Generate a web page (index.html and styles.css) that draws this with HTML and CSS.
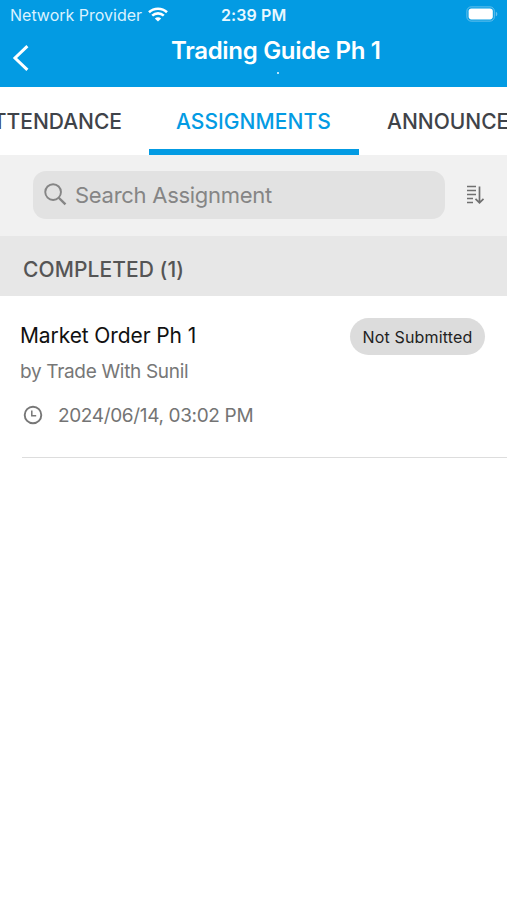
FILE: index.html
```html
<!DOCTYPE html>
<html lang="en">
<head>
<meta charset="utf-8">
<title>Trading Guide Ph 1</title>
<link rel="stylesheet" href="styles.css">
</head>
<body>
<header class="header">
  <div class="status">
    <div class="carrier"><span class="carrier-name">Network Provider</span>
      <svg class="wifi" viewBox="0 0 20 15" fill="none" stroke="#fff" stroke-width="2.6"><path d="M1 5.2C6 .6 14 .6 19 5.2M4.2 8.6c3.3-3 8.3-3 11.6 0"/><path d="M10 14.6 6.8 11.5c1.8-1.6 4.6-1.6 6.4 0z" fill="#fff" stroke="none"/></svg>
    </div>
    <span class="time">2:39 PM</span>
    <svg class="battery" viewBox="0 0 32 16"><rect x=".9" y=".9" width="27.4" height="14.2" rx="4.2" fill="none" stroke="#67c1ec"/><rect x="2.6" y="2.6" width="24.2" height="10.8" rx="2.8" fill="#fff"/><path d="M29.8 5.7c2 .6 2 4 0 4.600z" fill="#67c1ec"/></svg>
  </div>
  <div class="navbar">
    <svg class="back" viewBox="0 0 18 28" fill="none" stroke="#fff" stroke-width="3"><path d="M15.400 2.200 3 14l12.400 11.800"/></svg>
    <div class="heading"><h1 class="title">Trading Guide Ph 1</h1><span class="dot"></span></div>
  </div>
</header>
<nav class="tabs">
  <a class="tab tab-first"><span>ATTENDANCE</span></a>
  <a class="tab tab-active"><span>ASSIGNMENTS</span></a>
  <a class="tab tab-last"><span>ANNOUNCEMENTS</span></a>
</nav>
<section class="search-row">
  <div class="search">
    <svg class="magnifier" viewBox="0 0 24 24" fill="none" stroke="#858585" stroke-width="2"><circle cx="9.500" cy="9.500" r="8.200"/><path d="m15.400 15.400 7 7" stroke-width="2.500"/></svg>
    <span class="placeholder">Search Assignment</span>
  </div>
  <svg class="sort" viewBox="0 0 19 20" fill="none" stroke="#707070" stroke-width="1.500"><path d="M1 1.500h9M1 5.500h9M1 9.500h9M1 13.500h6M1 17.500h6"/><path d="M13.500 1.500v16M9.500 13.800l4 4 4-4" stroke-width="1.700"/></svg>
</section>
<h2 class="section"><span>COMPLETED (1)</span></h2>
<main class="item">
  <div class="item-top"><span class="name">Market Order Ph 1</span><span class="badge"><span>Not Submitted</span></span></div>
  <div class="author"><span>by Trade With Sunil</span></div>
  <div class="due">
    <svg class="clock" viewBox="0 0 20 20" fill="none" stroke="#777" stroke-width="1.900"><circle cx="10" cy="10" r="8.300"/><path d="M8.800 5.500v5.200h4.400" stroke-width="1.500"/></svg>
    <span class="date">2024/06/14, 03:02 PM</span>
  </div>
</main>
</body>
</html>
```
FILE: styles.css
```css
* { box-sizing: border-box; }
body { margin: 0; width: 507px; height: 900px; overflow: hidden; background: #fff; font-family: Inter, "Liberation Sans", sans-serif; white-space: nowrap; }
svg { display: block; flex: none; }
.header { height: 87px; background: #039be3; color: #fff; }
.status { height: 30px; display: grid; grid-template-columns: 211px 1fr auto; align-items: center; padding: 0 9px 0 10px; font-size: 16px; }
.carrier { display: flex; align-items: center; gap: 6px; color: #d9f2ff; }
.wifi { width: 20px; height: 15px; margin-top: -2px; }
.time { font-weight: 600; font-size: 16px; letter-spacing: .1px; color: #e8f8ff; }
.battery { width: 32px; height: 16px; margin-top: -2px; }
.navbar { height: 57px; display: flex; padding-left: 12px; }
.back { width: 18px; height: 28px; margin-top: 14px; }
.heading { margin-left: 142px; width: 212px; }
.title { margin: 5px 0 0 -1px; font-size: 24px; line-height: 32px; font-weight: 600; letter-spacing: -.3px; }
.dot { display: block; width: 2px; height: 2px; margin: 5px 0 0 105px; background: #b5e4fb; }
.tabs { height: 68px; display: flex; overflow: hidden; background: #fff; font-size: 21px; font-weight: 500; line-height: 69px; color: #3f4349; }
.tab { flex: none; height: 68px; }
.tab-first { width: 149px; display: flex; justify-content: flex-end; padding-right: 27px; }
.tab-active { width: 210px; padding-left: 27px; color: #039be3; border-bottom: 6px solid #039be3; letter-spacing: .05px; }
.tab-last { padding-left: 28px; }
.search-row { height: 81px; background: #f1f1f1; display: flex; align-items: center; padding-left: 33px; gap: 21px; }
.search { width: 412px; height: 48px; margin-top: -2px; border-radius: 13px; background: #e2e2e2; display: flex; align-items: center; padding-left: 11px; gap: 8px; color: #858585; font-size: 22px; letter-spacing: -.28px; }
.magnifier { width: 23px; height: 23px; }
.sort { width: 19px; height: 20px; margin-top: -1px; }
.section { margin: 0; height: 60px; padding: 4px 0 0 23px; background: #e7e7e7; color: #555; font-size: 21px; font-weight: 500; line-height: 60px; letter-spacing: .08px; }
.item { height: 162px; margin-left: 22px; border-bottom: 1px solid #ddd; padding-top: 22px; }
.item-top { display: flex; justify-content: space-between; align-items: center; height: 37px; margin: 0 22px 0 -2px; }
.name { font-size: 21px; color: #111; letter-spacing: -.1px; margin-top: -2px; }
.badge { width: 135px; height: 37px; border-radius: 19px; background: #dcdcdc; color: #222; font-size: 16px; letter-spacing: .17px; display: flex; align-items: center; justify-content: center; }
.author { margin: 4px 0 0 -2px; font-size: 19px; line-height: 26px; letter-spacing: -.32px; color: #777; }
.due { display: flex; align-items: center; gap: 15px; margin-top: 17px; height: 26px; padding-left: 1px; color: #747474; font-size: 19px; letter-spacing: -.35px; }
.clock { width: 20px; height: 20px; }
```
